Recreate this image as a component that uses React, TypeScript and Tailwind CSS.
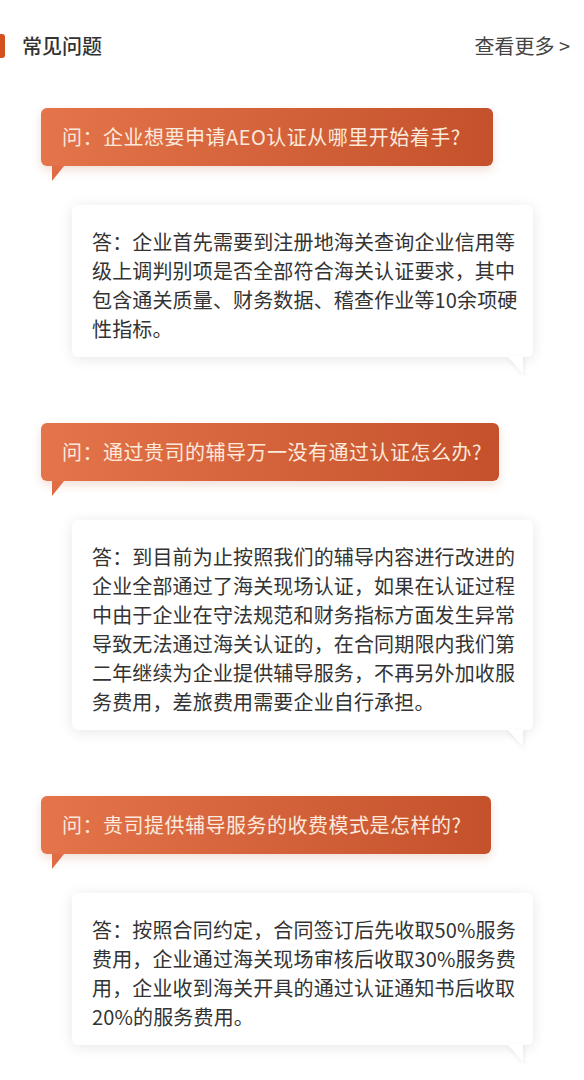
const faqs = [
  {
    q: "问：企业想要申请AEO认证从哪里开始着手?",
    w: "w-[452px]",
    a: [
      "答：企业首先需要到注册地海关查询企业信用等",
      "级上调判别项是否全部符合海关认证要求，其中",
      "包含通关质量、财务数据、稽查作业等10余项硬",
      "性指标。",
    ],
  },
  {
    q: "问：通过贵司的辅导万一没有通过认证怎么办?",
    w: "w-[458px]",
    a: [
      "答：到目前为止按照我们的辅导内容进行改进的",
      "企业全部通过了海关现场认证，如果在认证过程",
      "中由于企业在守法规范和财务指标方面发生异常",
      "导致无法通过海关认证的，在合同期限内我们第",
      "二年继续为企业提供辅导服务，不再另外加收服",
      "务费用，差旅费用需要企业自行承担。",
    ],
  },
  {
    q: "问：贵司提供辅导服务的收费模式是怎样的?",
    w: "w-[450px]",
    a: [
      "答：按照合同约定，合同签订后先收取50%服务",
      "费用，企业通过海关现场审核后收取30%服务费",
      "用，企业收到海关开具的通过认证通知书后收取",
      "20%的服务费用。",
    ],
  },
];

const QuestionBubble = ({ text, w }: { text: string; w: string }) => (
  <div
    className={`relative flex h-[58px] items-center rounded-[6px] bg-gradient-to-r from-[#e4744a] to-[#c4512b] pl-[21px] shadow-[0_4px_10px_rgba(180,70,30,0.18)] ${w}`}
  >
    <span className="whitespace-nowrap text-[20px] tracking-[0.5px] text-[#fde9dc]">
      {text}
    </span>
    {/* tail */}
    <svg
      className="absolute left-[11px] top-full"
      width="12"
      height="15"
      viewBox="0 0 12 15"
    >
      <path d="M0 0 L12 0 L0 15 Z" fill="#df6c43" />
    </svg>
  </div>
);

const AnswerBox = ({ lines }: { lines: string[] }) => (
  <div className="relative ml-[72px] w-[461px] rounded-[6px] bg-white pb-[14px] pl-[20px] pr-[12px] pt-[22px] shadow-[0_2px_14px_rgba(0,0,0,0.10)]">
    {lines.map((line, idx) => (
      <div
        key={idx}
        className="whitespace-nowrap text-[20px] leading-[29px] tracking-[0.15px] text-[#333333]"
      >
        {line}
      </div>
    ))}
    {/* tail */}
    <svg
      className="absolute right-[10px] top-full -mt-[1px] drop-shadow-[1px_2px_2px_rgba(0,0,0,0.08)]"
      width="16"
      height="18"
      viewBox="0 0 16 18"
    >
      <path d="M0 0 L16 0 L16 18 Z" fill="#ffffff" />
    </svg>
  </div>
);

export default function App() {
  return (
    <div
      className="min-h-[1080px] w-[584px] bg-white pb-[40px]"
      style={{ fontFamily: '"Noto Sans CJK SC", "Noto Sans", sans-serif' }}
    >
      {/* Header */}
      <div className="mt-[32px] flex h-[28px] items-center justify-between pr-[14px]">
        <div className="flex items-center">
          <div className="h-[24px] w-[5px] rounded-r-[3px] bg-[#d4511f]" />
          <span className="ml-[17px] text-[20px] font-medium text-[#333333]">
            常见问题
          </span>
        </div>
        <span className="text-[20px] text-[#444444]">查看更多 &gt;</span>
      </div>

      <div className="mt-[48px] flex flex-col gap-[66px]">
        {faqs.map((item, idx) => (
          <div key={idx} className="flex flex-col">
            <div className="ml-[41px]">
              <QuestionBubble text={item.q} w={item.w} />
            </div>
            <div className="mt-[39px]">
              <AnswerBox lines={item.a} />
            </div>
          </div>
        ))}
      </div>
    </div>
  );
}
